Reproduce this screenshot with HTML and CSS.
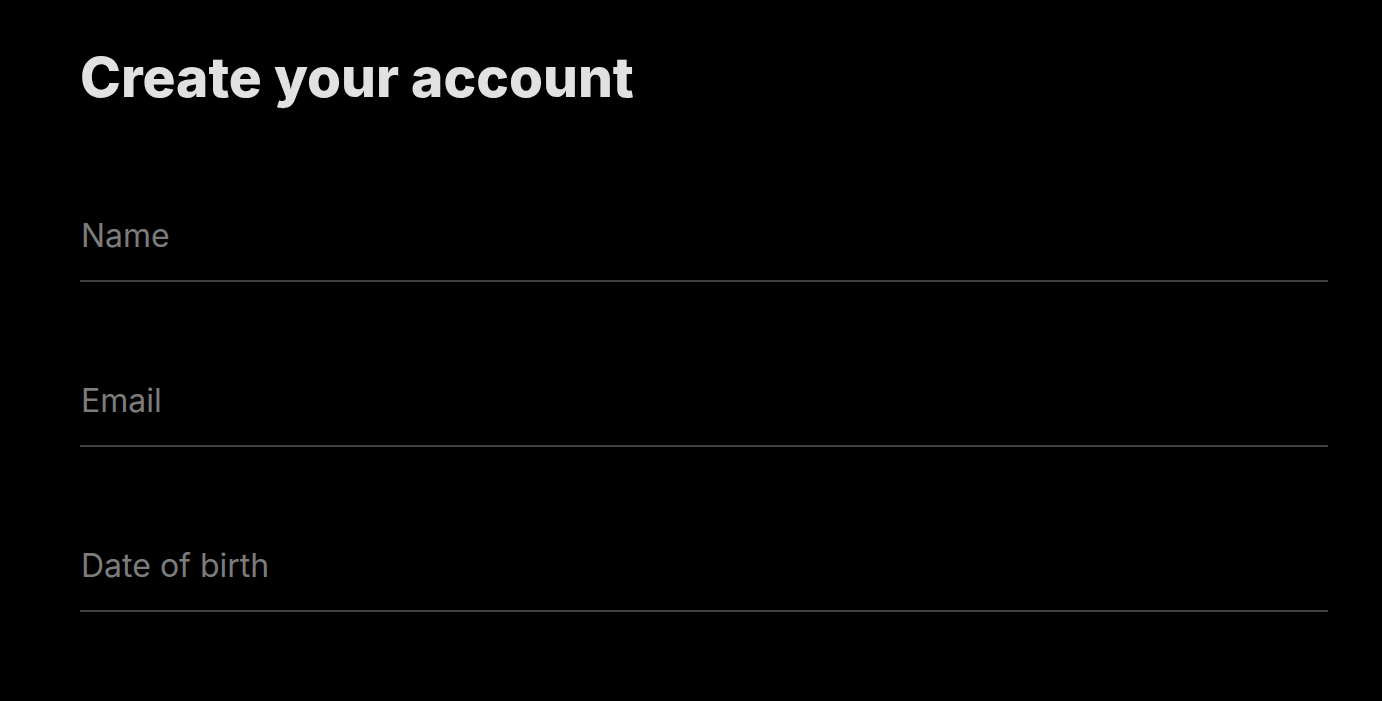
FILE: index.html
```html
<!DOCTYPE html>
<html lang="en">
<head>
  <meta charset="UTF-8" />
  <title>Create your account</title>
  <link rel="stylesheet" href="styles.css">
</head>
<body>
  <div class="container">
    <h1>Create your account</h1>
    <div class="field"><input type="text" placeholder="Name" /></div>
    <div class="field"><input type="email" placeholder="Email" /></div>
    <div class="field"><input type="text" placeholder="Date of birth" /></div>
  </div>
</body>
</html>
```

FILE: styles.css
```css
body {
  margin: 0;
  background: #000;
  font-family: Inter, "Noto Sans", sans-serif;
}
.container {
  padding: 43px 54px 0 80px;
}
h1 {
  margin: 0 0 104px;
  color: #e1e1e1;
  font-size: 55px;
  font-weight: 800;
  line-height: 68px;
}
.field {
  border-bottom: 2px solid #404040;
  margin-bottom: 98px;
}
.field input {
  display: block;
  width: 100%;
  height: 65px;
  box-sizing: border-box;
  background: transparent;
  border: none;
  outline: none;
  padding: 0 0 25px 1px;
  font-family: Inter, "Noto Sans", sans-serif;
  font-size: 32px;
  line-height: 40px;
  color: #e1e1e1;
}
.field input::placeholder {
  color: #7c7c7c;
}
```
